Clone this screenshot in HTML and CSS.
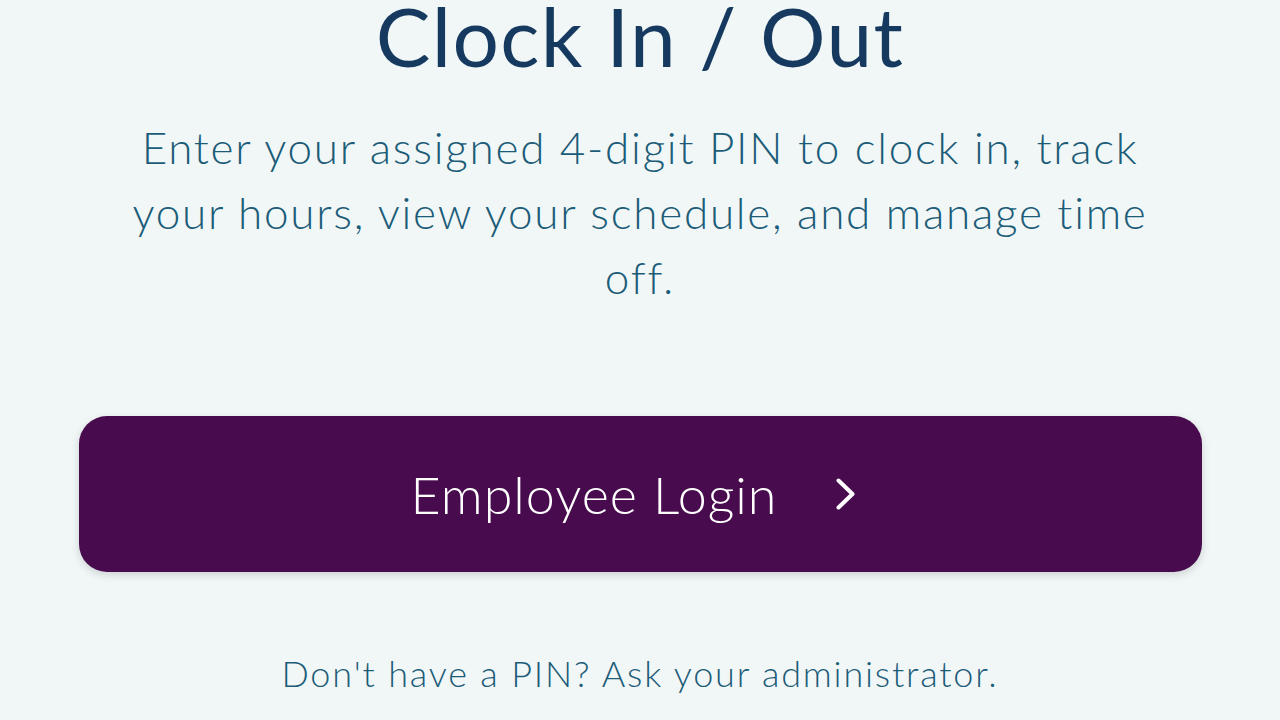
FILE: index.html
```html
<!DOCTYPE html>
<html>
<head>
<meta charset="utf-8">
<link rel="stylesheet" href="styles.css">
</head>
<body>
<main class="page">
  <h1 class="title">Clock In / Out</h1>
  <p class="intro">Enter your assigned 4-digit PIN to clock in, track your hours, view your schedule, and manage time off.</p>
  <button class="login">
    <span class="login-label">Employee Login</span>
    <svg class="chev" viewBox="0 0 33 32" width="33" height="32"><path d="M2.5 2.5 L16.5 16 L2.5 29.5" fill="none" stroke="#fff" stroke-width="4" stroke-linecap="round" stroke-linejoin="round"/></svg>
  </button>
  <p class="note">Don't have a PIN? Ask your administrator.</p>
</main>
</body>
</html>
```
FILE: styles.css
```css
html, body {
  margin: 0;
  padding: 0;
  background: #f1f7f7;
  height: 100%;
  overflow: hidden;
}
.page {
  display: flex;
  flex-direction: column;
  align-items: center;
  font-family: "Lato", "Noto Sans", sans-serif;
  font-weight: 300;
  padding: 0 78px;
}
.title {
  margin: 0;
  font-size: 82px;
  font-weight: 400;
  letter-spacing: 1.35px;
  color: #163a5f;
  line-height: 70px;
}
.intro {
  margin: 45px 0 0;
  width: 1060px;
  text-align: center;
  font-size: 44px;
  line-height: 65px;
  letter-spacing: 1.75px;
  color: #1c5c78;
}
.login {
  margin-top: 106px;
  width: 1123px;
  height: 156px;
  border: none;
  border-radius: 28px;
  background: #480b4e;
  box-shadow: 0 3px 8px rgba(0,0,0,0.15);
  display: flex;
  align-items: center;
  justify-content: center;
  gap: 59px;
  color: #fff;
  font-family: inherit;
  font-weight: 300;
  padding: 0;
}
.login-label {
  font-size: 52px;
  line-height: 1.2;
  letter-spacing: 1px;
}
.chev {
  display: block;
}
.note {
  margin: 80px 0 0;
  font-size: 36px;
  line-height: 1.2;
  letter-spacing: 1.8px;
  color: #1c5c78;
}
```
